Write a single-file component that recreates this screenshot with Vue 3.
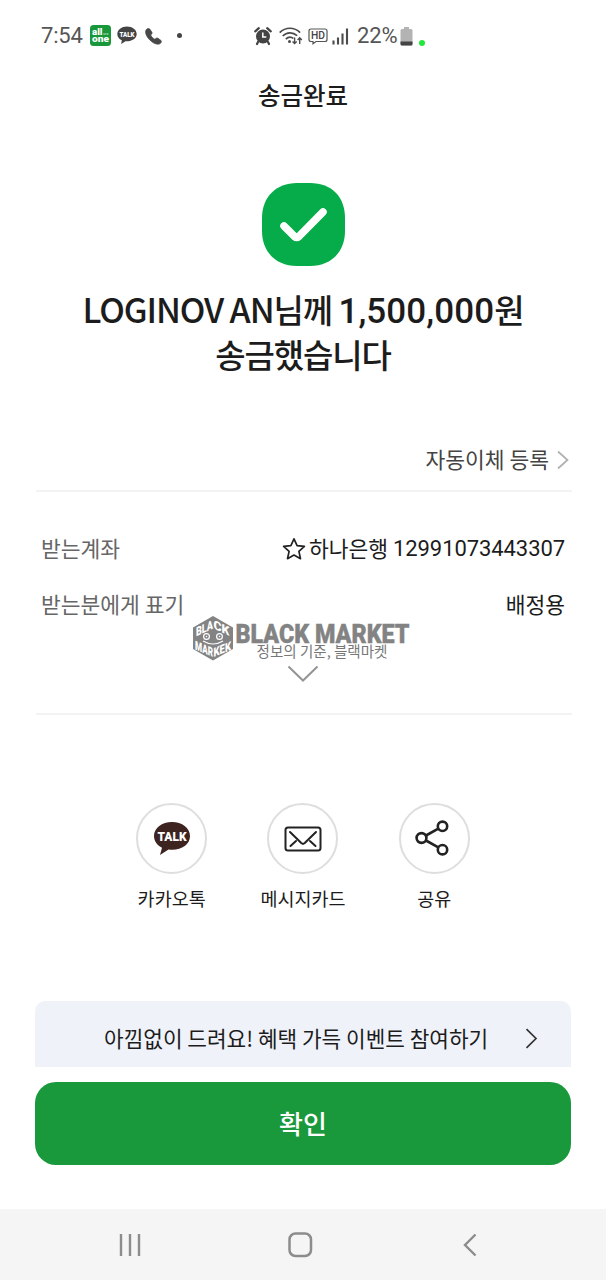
<script setup>
const rows = [
  { label: '받는계좌', bank: '하나은행', number: '12991073443307' },
  { label: '받는분에게 표기', name: '배정용' },
]
</script>

<template>
  <div class="screen">
    <header class="status">
      <span class="clock">7:54</span>
      <svg class="allone" width="21" height="21" viewBox="0 0 21 21">
        <rect width="21" height="21" rx="3.5" fill="#18983b" />
        <text x="2" y="9.500" textLength="10.500" lengthAdjust="spacingAndGlyphs">all</text>
        <path d="M13.500 9h5" stroke="#fff" stroke-width="1.200" stroke-dasharray="1.200 .6" />
        <text x="2" y="17.300" textLength="17" lengthAdjust="spacingAndGlyphs">one</text>
      </svg>
      <svg class="talk-s" width="20" height="19" viewBox="0 0 20 19">
        <path d="M10 0.500C4.600 .5.3 3.800.3 8c0 2.800 1.800 5 4.500 6.300L4.200 18l4.300-2.700c6.300.4 11.200-2.900 11.200-7.300C19.700 3.800 15.400.5 10 .5Z" fill="#444" />
        <text x="2.500" y="10.600" textLength="15" lengthAdjust="spacingAndGlyphs">TALK</text>
      </svg>
      <svg class="phone" width="17" height="17" viewBox="0 0 17 17">
        <path d="M1.200 1.700C2 .6 4 .1 4.800 1.100l2 3c.5.8.3 1.600-.3 2.200l-.8.8c1 1.900 2.300 3.200 4.200 4.200l.9-.8c.6-.6 1.400-.7 2.200-.2l2.800 2c1 .8.5 2.600-.6 3.300-2 1.300-5.700.4-9-2.400C1.900 9.700-.7 4.600 1.200 1.700Z" fill="#484848" stroke="#484848" stroke-width=".7" />
      </svg>
      <i class="dot"></i>

      <svg class="alarm" width="18" height="18" viewBox="0 0 18 18">
        <circle cx="9" cy="9.500" r="7" fill="#444" />
        <path d="M1.200 4.300 4.800 1.200M16.800 4.300l-3.600-3.100M4 15l-1 2M14 15l1 2" stroke="#444" stroke-width="2.200" stroke-linecap="round" />
        <path d="M8.800 5.500v4.500h3.500" fill="none" stroke="#fff" stroke-width="1.500" />
      </svg>
      <svg class="wifi" width="24" height="18" viewBox="0 0 24 18">
        <g fill="none" stroke="#4b4b4b" stroke-width="1.700">
          <path d="M.7 5.600c5.800-5.800 14.600-5.800 20.400 0" />
          <path d="M3.700 9c4.200-4.200 10.200-4.200 14.400-.4" />
          <path d="M6.800 12.200c2.300-2.400 5.400-2.500 7.600-.8" />
        </g>
        <circle cx="10.500" cy="14.500" r="1.500" fill="#4b4b4b" />
        <path d="M15.600 10.500v6M13.500 14.400l2.100 2.100 2.100-2.100M20.700 17v-6M18.600 12.900l2.100-2.100 2.100 2.100" fill="none" stroke="#4b4b4b" stroke-width="1.400" />
      </svg>
      <svg class="hd" width="20" height="17" viewBox="0 0 20 17">
        <path d="M3 1h14q2 0 2 2v8.500q0 2-2 2H8l-3 2.300v-2.300H3q-2 0-2-2V3q0-2 2-2Z" fill="none" stroke="#555" stroke-width="1.200" />
        <text x="3" y="11.300" textLength="14" lengthAdjust="spacingAndGlyphs">HD</text>
      </svg>
      <svg class="signal" width="17" height="17" viewBox="0 0 17 17">
        <path d="M1.500 16.500v-4M6 16.500v-7M10.500 16.500v-11M15 16.500V.5" stroke="#4b4b4b" stroke-width="2.100" />
      </svg>
      <span class="percent">22%</span>
      <svg class="battery" width="13" height="19" viewBox="0 0 13 19">
        <path d="M4 0h5v2h2q1.500 0 1.500 1.500v13.500q0 1.500-1.500 1.500H2Q.5 18.500.5 17V3.500Q.5 2 2 2h2Z" fill="#b3b3b3" />
        <path d="M.5 14.500h12V17q0 1.500-1.500 1.500H2Q.5 18.500.5 17Z" fill="#444" />
      </svg>
      <i class="live"></i>
    </header>

    <h1 class="title">송금완료</h1>

    <section class="result">
      <svg width="83" height="83" viewBox="0 0 83 83">
        <path d="M35 0h13C70 0 83 14 83 35v13c0 21-14 35-35 35H35C14 83 0 69 0 48V35C0 14 14 0 35 0Z" fill="#05ac49" />
        <path d="M22 43l10.500 10.500q2.200 1.800 4.400 0L61 29" fill="none" stroke="#fff" stroke-width="7.500" stroke-linecap="round" />
      </svg>
      <div class="message">
        <p><span class="payee">LOGINOV AN</span><span class="ko">님께 </span><b>1,500,000</b><span class="ko">원</span></p>
        <p class="ko">송금했습니다</p>
      </div>
    </section>

    <section class="details">
      <a class="auto">
        <span>자동이체 등록</span>
        <svg width="12" height="20" viewBox="0 0 12 20"><path d="M1 1.500 10.500 10 1 18.500" fill="none" stroke="#b0b0b0" stroke-width="1.700" /></svg>
      </a>
      <dl>
        <div v-for="row in rows" :key="row.label" class="row">
          <dt>{{ row.label }}</dt>
          <dd>
            <template v-if="row.number">
              <svg class="star" width="24" height="24" viewBox="0 0 24 24"><path d="M12 1.800l3.100 6.800 7.300.8-5.500 5 1.600 7.300L12 18l-6.500 3.700 1.600-7.300-5.500-5 7.300-.8Z" fill="none" stroke="#222" stroke-width="1.700" stroke-linejoin="round" /></svg>
              <span>{{ row.bank }}</span><span class="number">{{ row.number }}</span>
            </template>
            <span v-else>{{ row.name }}</span>
          </dd>
        </div>
      </dl>
      <svg class="more" width="32" height="18" viewBox="0 0 32 18"><path d="M1.500 1.500 16 15.500l14.500-14" fill="none" stroke="#949494" stroke-width="2" /></svg>

      <svg class="mark" width="224" height="46" viewBox="0 0 224 46">
        <path d="M21 0 41 11.500v21.500L21 44.500 1 33V11.500Z" fill="#838383" />
        <g class="badge">
          <text transform="translate(4 20.500) skewY(-25)" textLength="17" lengthAdjust="spacingAndGlyphs">BLA</text>
          <text transform="translate(21.500 12.500) skewY(25)" textLength="16" lengthAdjust="spacingAndGlyphs">CK</text>
          <text transform="translate(3 33.500) skewY(22)" textLength="18" lengthAdjust="spacingAndGlyphs">MAR</text>
          <text transform="translate(21.500 41) skewY(-22)" textLength="17.500" lengthAdjust="spacingAndGlyphs">KEK</text>
        </g>
        <g fill="none" stroke="#fff" stroke-width="1.200">
          <circle cx="14.500" cy="20.500" r="2.900" /><circle cx="27.500" cy="20.500" r="2.900" />
          <path d="M11 25q10 6 20 0" />
        </g>
        <circle cx="14.500" cy="20.500" r=".8" fill="#fff" /><circle cx="27.500" cy="20.500" r=".8" fill="#fff" />
        <text class="brand" x="43.500" y="27" textLength="174" lengthAdjust="spacingAndGlyphs">BLACK MARKET</text>
        <text class="slogan" x="64.500" y="40.500" textLength="131" lengthAdjust="spacingAndGlyphs">정보의 기준, 블랙마켓</text>
      </svg>
    </section>

    <section class="share">
      <div class="option">
        <span class="circle">
          <svg width="38" height="36" viewBox="0 0 38 36">
            <path d="M19 1C9 1 1 7 1 15c0 5.500 3.500 9.500 8 11.700L7 34l8.500-5.500C27 30 37 24.500 37 15 37 7 29 1 19 1Z" fill="#3e2421" />
            <text class="talk" x="4.500" y="20" textLength="29" lengthAdjust="spacingAndGlyphs">TALK</text>
          </svg>
        </span>
        <span>카카오톡</span>
      </div>
      <div class="option">
        <span class="circle">
          <svg width="38" height="28" viewBox="0 0 38 28">
            <g fill="none" stroke="#222" stroke-width="2" stroke-linecap="round" stroke-linejoin="round">
              <rect x="1.500" y="2.500" width="35" height="23" rx="2.500" />
              <path d="M6 7l11 10.800 2 1.200 2-1.200L32 7M6.500 21l5.500-5M31.500 21 26 16" />
            </g>
          </svg>
        </span>
        <span>메시지카드</span>
      </div>
      <div class="option">
        <span class="circle">
          <svg class="nodes" width="34" height="36" viewBox="0 0 34 36">
            <g fill="none" stroke="#222" stroke-width="2.600">
              <circle cx="6.500" cy="18" r="4.900" /><circle cx="27.500" cy="6.300" r="4.700" /><circle cx="27.500" cy="29.700" r="4.700" />
              <path d="M11 15.500 23.300 8.700M11 20.500l12.300 6.800" />
            </g>
          </svg>
        </span>
        <span>공유</span>
      </div>
    </section>

    <a class="event">
      <span>아낌없이 드려요! 혜택 가득 이벤트 참여하기</span>
      <svg width="13" height="21" viewBox="0 0 13 21"><path d="M1.500 1.200 11 10.500 1.500 19.800" fill="none" stroke="#333" stroke-width="1.700" /></svg>
    </a>
    <button class="confirm"><span>확인</span></button>

    <nav class="nav">
      <svg width="22" height="24" viewBox="0 0 22 24"><path d="M2 1v22M11 1v22M20 1v22" stroke="#8c8c8c" stroke-width="2.400" /></svg>
      <svg class="home" width="25" height="26" viewBox="0 0 25 26"><rect x="1.500" y="1.500" width="21.500" height="22.500" rx="6" fill="none" stroke="#8c8c8c" stroke-width="2.500" /></svg>
      <svg width="14" height="24" viewBox="0 0 14 24"><path d="M12.500 1.500 2 12l10.500 10.500" fill="none" stroke="#8c8c8c" stroke-width="2.400" /></svg>
    </nav>
  </div>
</template>

<style>
body { margin: 0; background: #fff; }
</style>

<style scoped>
.screen {
  width: 606px;
  height: 1280px;
  display: flex;
  flex-direction: column;
  background: #fff;
  color: #1c1c1c;
  font-family: "Noto Sans CJK KR", sans-serif;
  overflow: hidden;
}
svg { display: block; flex: none; overflow: visible; }
.status {
  height: 70px;
  box-sizing: border-box;
  padding-left: 41px;
  display: flex;
  align-items: center;
  flex: none;
  color: #555;
  font: 22px/24px Roboto, sans-serif;
}
.clock { width: 49px; letter-spacing: -0.2px; padding-top: 2px; }
.allone text { font: 900 9.500px Roboto, sans-serif; fill: #fff; }
.talk-s { margin-left: 6px; }
.talk-s text { font: 900 7px Roboto, sans-serif; fill: #fff; }
.phone { margin: 2px 0 0 8px; }
.dot { width: 5px; height: 5px; border-radius: 50%; background: #444; margin-left: 15px; }
.alarm { margin: 2px 0 0 72px; }
.wifi { margin: 2px 0 0 7px; }
.hd { margin: 2px 0 0 5px; }
.hd text { font: 500 11px Roboto, sans-serif; fill: #444; }
.signal { margin: 2px 0 0 4px; }
.percent { width: 43px; margin-left: 8px; letter-spacing: -0.1px; padding-top: 2px; }
.battery { margin-top: 2px; }
.live { width: 6px; height: 6px; border-radius: 50%; background: #22e83a; margin: 16px 0 0 6px; }

.title {
  margin: 10px 0 0;
  height: 30px;
  flex: none;
  text-align: center;
  font-size: 24.500px;
  line-height: 30px;
  font-weight: 500;
}
.result {
  margin-top: 73px;
  flex: none;
  display: flex;
  flex-direction: column;
  align-items: center;
}
.message {
  margin: 20px 0 0;
  text-align: center;
  font-size: 34px;
  line-height: 45px;
  font-weight: 500;
  white-space: nowrap;
}
.message p { margin: 0; height: 46px; }
.payee { letter-spacing: -1.1px; }
.ko { font-size: 33px; letter-spacing: -1.1px; }
.message b { font: 500 35px/45px Roboto, sans-serif; letter-spacing: .1px; }

.details {
  position: relative;
  margin: 58px 34px 0 36px;
  height: 279px;
  flex: none;
  display: flex;
  flex-direction: column;
  border-bottom: 2px solid #f3f3f3;
  font-size: 21.500px;
  box-sizing: border-box;
}
.auto {
  height: 56px;
  box-sizing: border-box;
  padding: 0 3px 6px 0;
  display: flex;
  align-items: center;
  justify-content: flex-end;
  gap: 8px;
  color: #444;
  border-bottom: 2px solid #f3f3f3;
}
.auto span { padding-bottom: 3px; }
dl { margin: 29px 7px 0 5px; }
.row { height: 56px; display: flex; align-items: center; justify-content: space-between; line-height: 52px; }
.row dt, .row dd > span:not(.number) { padding-bottom: 2px; }
dt { color: #666; }
dd { margin: 0; display: flex; align-items: center; color: #1c1c1c; }
.star { margin-right: 3px; }
.number { margin-left: 5px; font: 22px/56px Roboto, sans-serif; letter-spacing: -0.08px; }
.more { margin: 32px 0 0 251px; }
.mark { position: absolute; left: 156px; top: 180px; }
.badge text { font: 900 12.500px Roboto, sans-serif; fill: #fff; }
.brand { font: 900 25px Roboto, sans-serif; fill: #838383; stroke: #838383; stroke-width: .4px; }
.slogan { font: 14.500px "Noto Sans CJK KR", sans-serif; fill: #777; }

.share {
  margin: 88px 106px 0;
  height: 110px;
  flex: none;
  display: grid;
  grid-template-columns: repeat(3, 1fr);
}
.option { display: flex; flex-direction: column; align-items: center; gap: 9px; font-size: 18.500px; line-height: 30px; white-space: nowrap; }
.circle {
  width: 71px;
  height: 71px;
  box-sizing: border-box;
  border: 2px solid #dedede;
  border-radius: 50%;
  display: flex;
  align-items: center;
  justify-content: center;
}
.talk { font: 900 13px Roboto, sans-serif; fill: #fff; }
.nodes { margin-right: 4px; margin-bottom: 2px; }

.event {
  margin: 88px 35px 0;
  height: 66px;
  flex: none;
  display: flex;
  align-items: center;
  justify-content: space-between;
  box-sizing: border-box;
  padding: 8px 33px 0 69px;
  background: #f0f2fa;
  border-radius: 10px 10px 0 0;
  font-size: 21.350px;
  white-space: nowrap;
}
.event span { padding-bottom: 2px; }
.confirm {
  margin: 15px 35px 0;
  height: 83px;
  flex: none;
  border: 0;
  border-radius: 21px;
  background: #1a983c;
  color: #fff;
  font: 500 26px/36px "Noto Sans CJK KR", sans-serif;
}
.confirm span { display: block; padding-bottom: 2px; }
.nav {
  margin-top: auto;
  height: 71px;
  box-sizing: border-box;
  flex: none;
  background: #f5f5f5;
  display: flex;
  align-items: center;
  justify-content: space-between;
  padding: 0 129px 0 119px;
}
.home { margin-right: 4px; }
</style>
